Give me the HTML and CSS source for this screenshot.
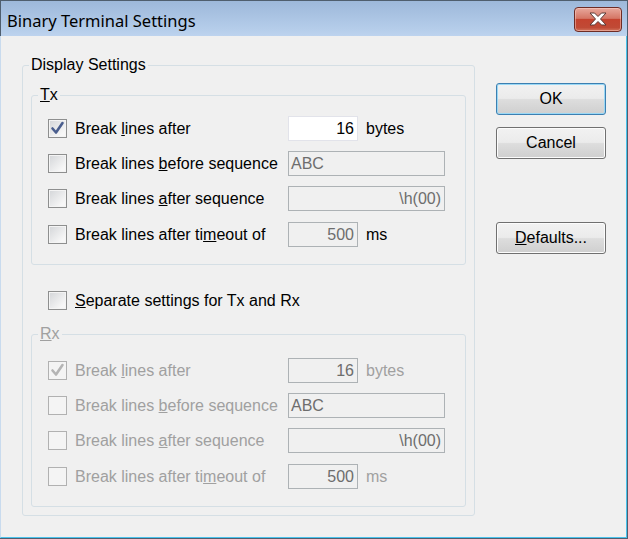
FILE: index.html
```html
<!DOCTYPE html>
<html>
<head>
<meta charset="utf-8">
<title>Binary Terminal Settings</title>
<link rel="stylesheet" href="styles.css">
</head>
<body>
<div class="window">
  <div class="titlebar">
    <span class="title">Binary Terminal Settings</span>
    <span class="close">
      <svg width="22" height="16" viewBox="0 0 22 16">
        <path d="M3 2 L7.5 2 L11 5.5 L14.5 2 L19 2 L13.5 8 L19 14 L14.5 14 L11 10.5 L7.5 14 L3 14 L8.5 8 Z" fill="#ffffff" stroke="#5a3a36" stroke-width="1" stroke-linejoin="round"/>
      </svg>
    </span>
  </div>
  <div class="client">
    <fieldset class="group outer">
      <legend>Display Settings</legend>
      <div class="outer-inner">
        <fieldset class="group sub tx">
          <legend><u>T</u>x</legend>
          <div class="sub-inner">
            <div class="row">
              <label class="check"><span class="cb"><svg width="19" height="19" viewBox="0 0 19 19"><path d="M4.5 9.5 L8 13.5 L14.5 4" fill="none" stroke="#4a5e8e" stroke-width="2.6" stroke-linecap="round" stroke-linejoin="round"/></svg></span><span>Break <u>l</u>ines after</span></label>
              <span class="field short num active">16</span>
              <span class="unit">bytes</span>
            </div>
            <div class="row">
              <label class="check"><span class="cb"></span><span>Break lines <u>b</u>efore sequence</span></label>
              <span class="field long dis">ABC</span>
            </div>
            <div class="row">
              <label class="check"><span class="cb"></span><span>Break lines <u>a</u>fter sequence</span></label>
              <span class="field long num dis">\h(00)</span>
            </div>
            <div class="row last">
              <label class="check"><span class="cb"></span><span>Break lines after ti<u>m</u>eout of</span></label>
              <span class="field short num dis">500</span>
              <span class="unit">ms</span>
            </div>
          </div>
        </fieldset>
        <div class="row separate">
          <label class="check"><span class="cb"></span><span><u>S</u>eparate settings for Tx and Rx</span></label>
        </div>
        <fieldset class="group sub rx disabled">
          <legend><u>R</u>x</legend>
          <div class="sub-inner">
            <div class="row">
              <label class="check"><span class="cb"><svg width="19" height="19" viewBox="0 0 19 19"><path d="M4.5 9.5 L8 13.5 L14.5 4" fill="none" stroke="#b4b4b4" stroke-width="2.6" stroke-linecap="round" stroke-linejoin="round"/></svg></span><span>Break <u>l</u>ines after</span></label>
              <span class="field short num dis">16</span>
              <span class="unit">bytes</span>
            </div>
            <div class="row">
              <label class="check"><span class="cb"></span><span>Break lines <u>b</u>efore sequence</span></label>
              <span class="field long dis">ABC</span>
            </div>
            <div class="row">
              <label class="check"><span class="cb"></span><span>Break lines <u>a</u>fter sequence</span></label>
              <span class="field long num dis">\h(00)</span>
            </div>
            <div class="row last">
              <label class="check"><span class="cb"></span><span>Break lines after ti<u>m</u>eout of</span></label>
              <span class="field short num dis">500</span>
              <span class="unit">ms</span>
            </div>
          </div>
        </fieldset>
      </div>
    </fieldset>
    <div class="buttons">
      <button class="btn default">OK</button>
      <button class="btn">Cancel</button>
      <button class="btn defaults"><u>D</u>efaults...</button>
    </div>
  </div>
</div>
</body>
</html>
```
FILE: styles.css
```css
html, body {
  margin: 0;
  padding: 0;
  background: #f0f0f0;
}
body {
  width: 628px;
  height: 539px;
  overflow: hidden;
  font-family: "Liberation Sans", Arial, sans-serif;
  font-size: 16px;
  color: #000;
}
.window {
  width: 628px;
  height: 539px;
  box-sizing: border-box;
  border: 1px solid #4f5e6e;
  display: flex;
  flex-direction: column;
  background: #f0f0f0;
}
.titlebar {
  height: 35px;
  flex: none;
  display: flex;
  align-items: center;
  justify-content: space-between;
  background: linear-gradient(#9db8da, #b5cdea 80%, #bdd3ee);
  padding-left: 6px;
  padding-right: 5px;
}
.title {
  font-family: "Noto Sans", "Open Sans", sans-serif;
  font-size: 16.5px;
  color: #000;
  padding-top: 3px;
}
.close {
  width: 48px;
  height: 25px;
  box-sizing: border-box;
  border: 1px solid #6e2c25;
  border-radius: 4px;
  background: linear-gradient(#e8a89c, #d57665 45%, #c4432f 50%, #c04a35 85%, #d2745d);
  display: flex;
  align-items: center;
  justify-content: center;
  margin-top: 1px;
  box-shadow: inset 0 0 0 1px rgba(255, 220, 210, 0.45);
}
.client {
  flex: 1;
  display: flex;
  align-items: flex-start;
  padding-left: 21px;
  border-left: 1px solid #c9dbee;
  border-right: 1px solid #49c2ec;
  border-bottom: 1px solid #49c2ec;
  margin-left: -1px;
}
.group {
  margin: 0;
  padding: 0;
  min-width: 0;
  border: 1px solid #d5dfe5;
  border-radius: 3px;
  box-sizing: border-box;
}
.group legend {
  padding: 0 2px;
  margin-left: 6px;
  line-height: 18px;
}
.outer {
  width: 453px;
  margin-top: 20px;
}
.outer-inner {
  padding: 12px 8px 8px 8px;
}
.sub-inner {
  padding: 12px 16px 17px 16px;
  display: flex;
  flex-direction: column;
  gap: 10px;
}
.rx .sub-inner {
  padding-top: 15px;
}
.row {
  height: 25px;
  display: flex;
  align-items: center;
}
.row.last {
  margin-top: 1px;
}
.check {
  width: 240px;
  flex: none;
  display: flex;
  align-items: center;
  gap: 8px;
  white-space: nowrap;
}
.cb {
  width: 19px;
  height: 19px;
  box-sizing: border-box;
  border: 1px solid #8e8f8f;
  background: linear-gradient(135deg, #d3d5d8, #f7f7f7 80%);
  box-shadow: inset 0 0 0 1px #f4f4f4;
  position: relative;
  flex: none;
}
.cb svg {
  position: absolute;
  left: -1px;
  top: -1px;
}
.field {
  height: 25px;
  box-sizing: border-box;
  border: 1px solid #adb2b5;
  display: flex;
  align-items: center;
  padding: 0 3px 0 2px;
  line-height: 23px;
  white-space: nowrap;
}
.field.num {
  justify-content: flex-end;
}
.field.short {
  width: 70px;
}
.field.long {
  width: 157px;
}
.field.active {
  background: #fff;
  border-color: #e2e3ea;
  color: #000;
}
.field.dis {
  background: #f0f0f0;
  color: #6d6d6d;
}
.unit {
  margin-left: 8px;
}
.tx {
  margin-bottom: 23px;
}
.separate {
  margin-left: 17px;
}
.rx {
  margin-top: 12px;
}
.disabled legend,
.disabled .check,
.disabled .unit {
  color: #a0a0a0;
}
.disabled .cb {
  border-color: #b1b1b1;
  background: #f4f4f4;
  box-shadow: none;
}
.buttons {
  margin-top: 47px;
  margin-left: 21px;
  display: flex;
  flex-direction: column;
}
.btn {
  width: 110px;
  height: 32px;
  box-sizing: border-box;
  border: 1px solid #707070;
  border-radius: 3px;
  background: linear-gradient(#f2f2f2, #ebebeb 48%, #dddddd 52%, #cfcfcf);
  box-shadow: inset 0 0 0 1px #fcfcfc;
  font-family: "Liberation Sans", Arial, sans-serif;
  font-size: 16px;
  color: #000;
  padding: 0;
  margin: 0 0 12px 0;
}
.btn.default {
  border-color: #3c7fb1;
  box-shadow: inset 0 0 0 1px #9ad8f5;
}
.btn.defaults {
  margin-top: 51px;
}
```
